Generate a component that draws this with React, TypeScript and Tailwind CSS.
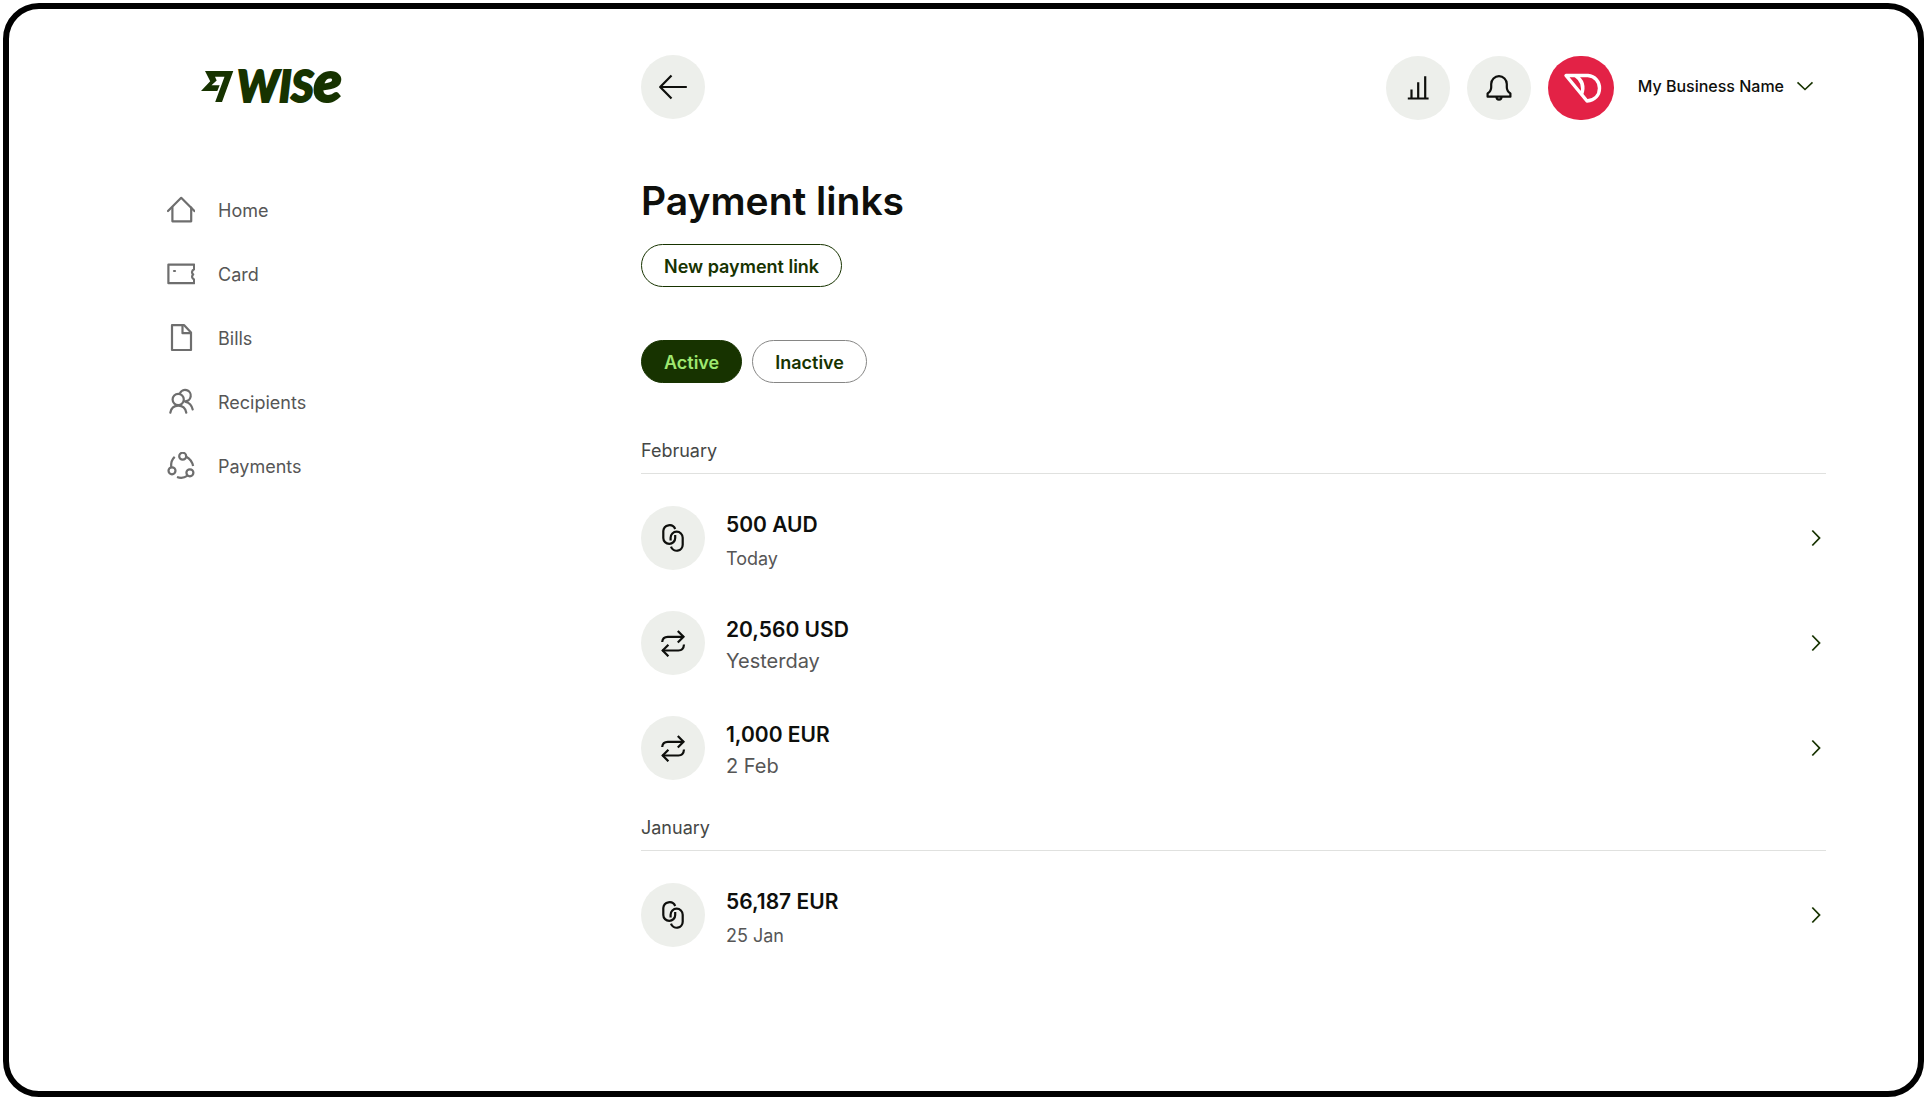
import React, { useState } from "react";

type IconProps = {
  className?: string;
};

const HomeIcon: React.FC<IconProps> = ({ className }) => (
  <svg viewBox="0 0 28 28" fill="none" stroke="currentColor" strokeWidth="2.2" strokeLinecap="round" strokeLinejoin="round" className={className}>
    <path d="M1 15 14.2 1.8 27.4 15" />
    <path d="M5.4 11.5v13.8h18.8V11.5" />
  </svg>
);

const CardIcon: React.FC<IconProps> = ({ className }) => (
  <svg viewBox="0 0 28 28" fill="none" stroke="currentColor" strokeWidth="2.2" strokeLinecap="round" strokeLinejoin="round" className={className}>
    <path d="M1.4 4.6h25.7v4.600c-2.600 1.500-2.600 4-.9 5.200-1.600 1.500-1.600 3.800.9 5v3.800H1.400z" />
    <path d="M7 11h1" />
  </svg>
);

const BillsIcon: React.FC<IconProps> = ({ className }) => (
  <svg viewBox="0 0 28 28" fill="none" stroke="currentColor" strokeWidth="2.2" strokeLinejoin="round" className={className}>
    <path d="M5 1.200h12.200l6.800 7.300v17.500H5z" />
    <path d="M15.500 1.200v8h8.500" />
  </svg>
);

const RecipientsIcon: React.FC<IconProps> = ({ className }) => (
  <svg viewBox="0 0 28 28" fill="none" stroke="currentColor" strokeWidth="2.2" strokeLinecap="round" className={className}>
    <circle cx="11.200" cy="11.500" r="5.600" />
    <path d="M12.800 5.400A5.700 5.700 0 1 1 17.800 13.300" />
    <path d="M3.300 24.700c.8-4.200 3.600-7 8-7s7.200 2.800 8 7" />
    <path d="M18.800 14c3.500.8 6 3.500 6.900 7.500" />
  </svg>
);

const PaymentsIcon: React.FC<IconProps> = ({ className }) => (
  <svg viewBox="0 0 28 28" fill="none" stroke="currentColor" strokeWidth="2.2" className={className}>
    <circle cx="15.700" cy="4.200" r="3.500" />
    <circle cx="5" cy="18.800" r="3.500" />
    <circle cx="22.900" cy="20.800" r="3.500" />
    <path d="M7.700 4.800C5.200 7 3.800 10.500 4.200 15" />
    <path d="M19.200 4.700c3.600 1.800 6 5 6.900 9.300" />
    <path d="M10 25c3.500 1.300 7.300.9 10.500-1.300" />
  </svg>
);

const ArrowLeftIcon: React.FC<IconProps> = ({ className }) => (
  <svg viewBox="0 0 28 28" fill="none" stroke="currentColor" strokeWidth="2.2" strokeLinejoin="round" className={className}>
    <path d="M27.800 14H1.500M12.500 2.500 1.200 14l11.300 11.500" />
  </svg>
);

const ChartIcon: React.FC<IconProps> = ({ className }) => (
  <svg viewBox="0 0 28 28" fill="none" stroke="currentColor" strokeWidth="2.2" className={className}>
    <path d="M3.800 24.500h20.800M7.500 24.500V15.500M14.200 24.500V8.300M21.200 24.500V2.300" />
  </svg>
);

const BellIcon: React.FC<IconProps> = ({ className }) => (
  <svg viewBox="0 0 28 28" fill="none" stroke="currentColor" strokeWidth="2.2" strokeLinejoin="round" className={className}>
    <path d="M2.600 22.700v-3.300c2.400-1.500 3.600-3.400 3.600-6.200V10a7.800 7.800 0 0 1 15.600 0v3.200c0 2.800 1.200 4.700 3.600 6.200v3.300z" />
    <path d="M11.500 22.700a2.500 2.900 0 0 0 5 0" />
  </svg>
);

const LinkIcon: React.FC<IconProps> = ({ className }) => (
  <svg viewBox="0 0 28 28" fill="none" stroke="currentColor" strokeWidth="2.2" className={className}>
    <path d="M16.200 5A6.200 6.200 0 0 0 4.300 7v6.900a5.800 5.800 0 0 0 11.900 0V11" />
    <path d="M11.600 16.500v-2.800a6 6 0 0 1 12.100 0v6.900a6 6 0 0 1-11.700 2" />
  </svg>
);

const RepeatIcon: React.FC<IconProps> = ({ className }) => (
  <svg viewBox="0 0 28 28" fill="none" stroke="currentColor" strokeWidth="2.2" className={className}>
    <path d="M3.200 13c.3-3.500 2.300-5.200 5.600-5.200H25" />
    <path d="m18.800 2 5.700 5.800-5.700 5.700" />
    <path d="M25 15.500c-.3 3.800-2.300 6-5.600 6H3.200" />
    <path d="m9.400 15.700-5.700 5.800 5.700 5.800" />
  </svg>
);

const BrandMark: React.FC<IconProps> = ({ className }) => (
  <svg viewBox="0 0 33 31" fill="currentColor" className={className}>
    <path d="M4 0h28.300L21 31h-6.800l9.300-25.200H14l1.700 3.600-5.200 4.800h8.200l-2.400 5.900H0l9.200-9.900z" />
  </svg>
);

const BusinessLogo: React.FC<IconProps> = ({ className }) => (
  <svg viewBox="0 0 64 64" fill="none" stroke="currentColor" strokeWidth="3.4" strokeLinejoin="round" className={className}>
    <path d="M17 19.500h22c7 .6 11.500 6 11.500 12.700S46 44 38 45z" />
    <path d="M26.500 19.500c6.500 4.500 9 11 6 19" />
  </svg>
);

const ChevronRight: React.FC<IconProps> = ({ className }) => (
  <svg viewBox="0 0 10 18" fill="none" stroke="currentColor" strokeWidth="1.8" className={className}>
    <path d="m1.300 1.500 7.200 7.500-7.200 7.500" />
  </svg>
);

const ChevronDown: React.FC<IconProps> = ({ className }) => (
  <svg viewBox="0 0 18 10" fill="none" stroke="currentColor" strokeWidth="1.6" className={className}>
    <path d="M1.500 1.300 9 8.500l7.500-7.200" />
  </svg>
);

const navItems = [
  { label: "Home", Icon: HomeIcon },
  { label: "Card", Icon: CardIcon },
  { label: "Bills", Icon: BillsIcon },
  { label: "Recipients", Icon: RecipientsIcon },
  { label: "Payments", Icon: PaymentsIcon },
];

type Payment = {
  amount: string;
  date: string;
  type: "link" | "repeat";
};

const months: { name: string; payments: Payment[] }[] = [
  {
    name: "February",
    payments: [
      { amount: "500 AUD", date: "Today", type: "link" },
      { amount: "20,560 USD", date: "Yesterday", type: "repeat" },
      { amount: "1,000 EUR", date: "2 Feb", type: "repeat" },
    ],
  },
  {
    name: "January",
    payments: [{ amount: "56,187 EUR", date: "25 Jan", type: "link" }],
  },
];

const tabs = ["Active", "Inactive"];

const Sidebar = () => (
  <aside className="w-[33%] shrink-0 pl-[158px] pt-[62px]">
    <a href="#" aria-label="Wise" className="ml-[34px] flex h-[31px] w-fit items-center gap-[3px] text-[#173300]">
      <BrandMark className="h-[31px] w-[33px] shrink-0" />
      <span className="flex items-baseline pb-2 font-['Lato'] text-[43px] font-black italic leading-[31px] [-webkit-text-stroke:2px_#173300]">
        WIS<span className="text-[58px] leading-[31px]">e</span>
      </span>
    </a>
    <nav className="mt-[76px]">
      <ul>
        {navItems.map(({ label, Icon }) => (
          <li key={label}>
            <a href="#" className="flex h-16 items-center gap-[23px] text-lg text-[#565656]">
              <Icon className="size-7 text-[#6e6e6e]" />
              <span className="pt-px">{label}</span>
            </a>
          </li>
        ))}
      </ul>
    </nav>
  </aside>
);

const Header = () => (
  <header className="flex h-[66px] items-start justify-between">
    <button aria-label="Back" className="flex size-16 items-center justify-center rounded-full bg-[#edefeb]">
      <ArrowLeftIcon className="size-7" />
    </button>
    <div className="flex h-full items-center gap-[17px] pr-3">
      <button aria-label="Insights" className="flex size-16 items-center justify-center rounded-full bg-[#edefeb]">
        <ChartIcon className="size-7" />
      </button>
      <button aria-label="Notifications" className="flex size-16 items-center justify-center rounded-full bg-[#edefeb]">
        <BellIcon className="size-7" />
      </button>
      <button className="flex items-center text-base font-medium">
        <span className="h-16 w-[66px] rounded-full bg-[#e32246] text-white">
          <BusinessLogo className="size-full" />
        </span>
        <span className="ml-6 flex items-center gap-3 pb-1">
          My Business Name
          <ChevronDown className="h-[10px] w-[18px] text-[#173300]" />
        </span>
      </button>
    </div>
  </header>
);

const PaymentRow: React.FC<{ payment: Payment }> = ({ payment }) => {
  const isLink = payment.type === "link";

  return (
    <li>
      <button className="flex w-full items-center pr-[5px] text-left">
        <span className="flex size-16 items-center justify-center rounded-full bg-[#edefeb]">
          {isLink ? <LinkIcon className="size-7" /> : <RepeatIcon className="size-7" />}
        </span>
        <span className={`ml-[21px] flex h-16 flex-1 flex-col pt-[5px] ${isLink ? "gap-2" : "gap-[5px]"}`}>
          <span className="text-[21px] font-semibold leading-[28px]">{payment.amount}</span>
          <span className={`text-[#565656] ${isLink ? "text-lg/6" : "text-xl/6"}`}>{payment.date}</span>
        </span>
        <ChevronRight className="h-[18px] w-[10px] text-[#173300]" />
      </button>
    </li>
  );
};

const App = () => {
  const [activeTab, setActiveTab] = useState("Active");

  return (
    <div className="flex min-h-screen bg-white p-[3px] font-['Inter',sans-serif] text-[#0e0f0c]">
      <div className="flex flex-1 rounded-[36px] border-[6px] border-black">
        <Sidebar />
        <main className="flex-1 pb-16 pl-[2px] pr-[92px] pt-[46px]">
          <Header />
          <h1 className="mt-14 text-[39px] font-semibold leading-[48px]">Payment links</h1>
          <button className="mt-[19px] h-[43px] rounded-full border border-[#173300] px-[22px] pt-0.5 text-lg font-semibold text-[#173300]">
            New payment link
          </button>
          <div className="mt-[53px] flex gap-[10px]">
            {tabs.map((tab) => (
              <button
                key={tab}
                onClick={() => setActiveTab(tab)}
                className={`h-[43px] rounded-full border px-[22px] pt-0.5 text-lg font-semibold ${
                  tab === activeTab ? "border-[#173300] bg-[#173300] text-[#9fe870]" : "border-[#868685] text-[#173300]"
                }`}
              >
                {tab}
              </button>
            ))}
          </div>
          <div className="mt-14 flex flex-col gap-9">
            {months.map((month) => (
              <section key={month.name}>
                <h2 className="border-b border-[#e0e1df] pb-[10px] text-lg leading-6 text-[#454745]">{month.name}</h2>
                <ul className="mt-8 flex flex-col gap-[41px]">
                  {month.payments.map((payment) => (
                    <PaymentRow key={payment.amount} payment={payment} />
                  ))}
                </ul>
              </section>
            ))}
          </div>
        </main>
      </div>
    </div>
  );
};

export default App;
